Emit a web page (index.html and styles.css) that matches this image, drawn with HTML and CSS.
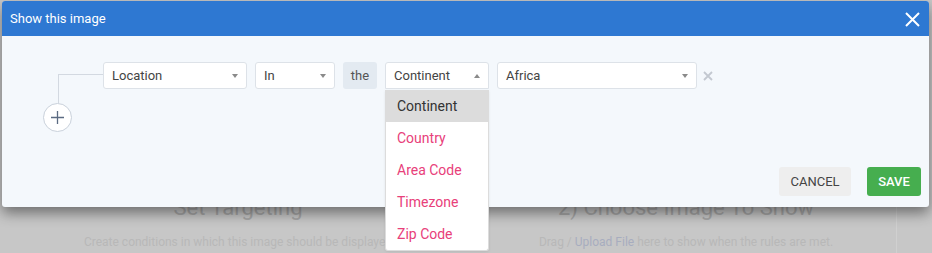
FILE: index.html
```html
<!DOCTYPE html>
<html lang="en">
<head>
  <meta charset="UTF-8" />
  <title>Show this image</title>
  <meta name="viewport" content="width=device-width, initial-scale=1.0" />
  <link rel="stylesheet" href="styles.css">
</head>
<body>
  <div class="page">
    <section class="step">
      <h2>Set Targeting</h2>
      <p>Create conditions in which this image should be displayed</p>
    </section>
    <section class="step step-right">
      <h2>2) Choose Image To Show</h2>
      <p>Drag / <span class="link">Upload File</span> here to show when the rules are met.</p>
    </section>
  </div>

  <div class="modal">
    <header class="modal-head">
      <span class="modal-title">Show this image</span>
      <button class="close" aria-label="Close">
        <svg width="15" height="15" viewBox="0 0 15 15"><path d="M1 1L14 14M14 1L1 14" stroke="#fff" stroke-width="2" fill="none"/></svg>
      </button>
    </header>

    <div class="modal-body">
      <div class="tree">
        <div class="branch"></div>
        <button class="add">
          <svg width="15" height="15" viewBox="0 0 15 15"><path d="M7.5 1V14M1 7.5H14" stroke="#5b6b82" stroke-width="1.3" fill="none"/></svg>
        </button>
      </div>

      <div class="rule">
        <div class="select w-location">Location<span class="caret"></span></div>
        <div class="select w-in">In<span class="caret"></span></div>
        <div class="word">the</div>
        <div class="select w-type open">Continent<span class="caret up"></span>
          <ul class="menu">
            <li class="active">Continent</li>
            <li>Country</li>
            <li>Area Code</li>
            <li>Timezone</li>
            <li>Zip Code</li>
          </ul>
        </div>
        <div class="select w-value">Africa<span class="caret"></span></div>
        <span class="remove">
          <svg width="10" height="10" viewBox="0 0 10 10"><path d="M1 1L9 9M9 1L1 9" stroke="#c3c8d0" stroke-width="1.8" fill="none"/></svg>
        </span>
      </div>
    </div>

    <footer class="modal-foot">
      <button class="btn btn-cancel">CANCEL</button>
      <button class="btn btn-save">SAVE</button>
    </footer>
  </div>
</body>
</html>
```

FILE: styles.css
```css
* {
  box-sizing: border-box;
  margin: 0;
  padding: 0;
}

body {
  font-family: Roboto, 'Liberation Sans', sans-serif;
  background: #c7c7c7;
  width: 932px;
  height: 253px;
  overflow: hidden;
  position: relative;
}

/* faded page behind the modal */
.page {
  display: grid;
  grid-template-columns: 476px 421px;
  padding-top: 194px;
}

.step {
  text-align: center;
  color: #b9b9b9;
}

.step-right {
  border-right: 1px solid #d0d0d0;
  height: 59px;
}

.step h2 {
  font-size: 22px;
  font-weight: 400;
  color: #a6a6a6;
  line-height: 28px;
}

.step p {
  font-size: 12px;
  margin-top: 13px;
  color: #b8b8b8;
}

.step .link {
  color: #a7adbf;
}

/* modal */
.modal {
  position: absolute;
  left: 2px;
  top: 1px;
  width: 927px;
  height: 206px;
  background: #f4f8fc;
  border-radius: 3px;
  box-shadow: 0 6px 14px rgba(0, 0, 0, 0.45);
  display: flex;
  flex-direction: column;
}

.modal-head {
  height: 35px;
  background: #2e78d2;
  border-radius: 3px 3px 0 0;
  display: flex;
  align-items: center;
  justify-content: space-between;
  padding: 0 9px 0 8px;
}

.modal-title {
  color: #fff;
  font-size: 13px;
}

.close {
  background: none;
  border: none;
  display: flex;
  padding: 0;
  margin-top: 1px;
}

.modal-body {
  flex: 1;
  display: flex;
  padding: 26px 0 0 41px;
}

.tree {
  width: 60px;
  display: flex;
  flex-direction: column;
}

.branch {
  margin-left: 15px;
  margin-top: 12px;
  height: 29px;
  border-left: 1.5px solid #d3d9e1;
  border-top: 1.5px solid #d3d9e1;
}

.add {
  width: 29px;
  height: 29px;
  border-radius: 50%;
  border: 1px solid #c9d1db;
  background: #fff;
  display: flex;
  align-items: center;
  justify-content: center;
}

.rule {
  display: flex;
  align-items: flex-start;
  gap: 8px;
}

.select {
  position: relative;
  height: 27px;
  background: #fff;
  border: 1px solid #dde2e8;
  border-radius: 3px;
  font-size: 13px;
  color: #444;
  line-height: 25px;
  padding-left: 8px;
}

.w-location { width: 144px; }
.w-in { width: 80px; }
.w-type { width: 104px; }
.w-value { width: 200px; }

.select.open {
  border-radius: 3px 3px 0 0;
}

.caret {
  position: absolute;
  right: 8px;
  top: 11px;
  border-left: 3.5px solid transparent;
  border-right: 3.5px solid transparent;
  border-top: 4px solid #8a8a8a;
}

.caret.up {
  border-top: none;
  border-bottom: 4px solid #8a8a8a;
}

.word {
  width: 34px;
  height: 27px;
  background: #e3eaf1;
  border-radius: 3px;
  font-size: 13px;
  color: #555;
  text-align: center;
  line-height: 27px;
}

.menu {
  list-style: none;
  position: absolute;
  left: -1px;
  top: 27px;
  width: 104px;
  background: #fff;
  border: 1px solid #dcdcdc;
  border-top: none;
  border-radius: 0 0 3px 3px;
  box-shadow: 0 1px 3px rgba(0, 0, 0, 0.08);
  z-index: 5;
}

.menu li {
  height: 32px;
  line-height: 33px;
  padding-left: 11px;
  font-size: 14px;
  color: #e8407a;
}

.menu li.active {
  background: #dcdcdc;
  color: #333;
}

.remove {
  display: flex;
  margin: 9px 0 0 -2px;
}

.modal-foot {
  display: flex;
  justify-content: flex-end;
  gap: 16px;
  padding: 0 8px 11px 0;
}

.btn {
  height: 29px;
  border: none;
  border-radius: 3px;
  font-family: Roboto, 'Liberation Sans', sans-serif;
  font-size: 13px;
  cursor: pointer;
}

.btn-cancel {
  width: 72px;
  background: #eeeeee;
  color: #444;
}

.btn-save {
  width: 54px;
  background: #46ae4f;
  color: #fff;
  font-weight: 500;
}
```
